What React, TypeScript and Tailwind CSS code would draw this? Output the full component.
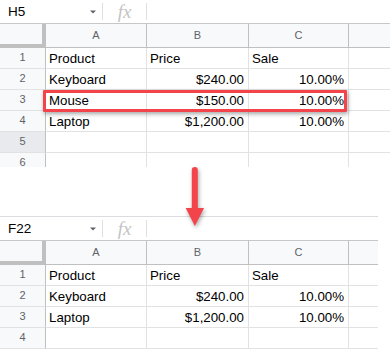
import React from "react";

type Row = [string, string, string];

const FONT = { fontFamily: '"Liberation Sans", Arial, Helvetica, sans-serif' };

const isNum = (s: string) => /^[$0-9]/.test(s);

function FormulaBar({ name, top }: { name: string; top: boolean }) {
  return (
    <div
      className={
        "flex items-stretch bg-white border-b border-[#c7c7c7] " +
        (top ? "h-[25px] border-t border-t-[#dadce0]" : "h-[24px]")
      }
    >
      <div className="w-[102px] shrink-0 flex items-center pl-[8px] pr-[6px] relative">
        <span className="text-[13.5px] text-black leading-none">{name}</span>
        <svg className="absolute left-[90px] top-1/2 -translate-y-1/2" width="6" height="4" viewBox="0 0 6 4">
          <polygon points="0,0.5 6,0.5 3,3.5" fill="#5f6368" />
        </svg>
      </div>
      <div className="w-px bg-[#e0e0e0] my-[3px]" />
      <div className="w-[43px] shrink-0 flex items-center justify-center">
        <span
          className="text-[19px] italic text-[#c4c4c4] leading-none"
          style={{ fontFamily: '"Liberation Serif", "Times New Roman", serif' }}
        >
          fx
        </span>
      </div>
      <div className="w-px bg-[#e0e0e0] my-[3px]" />
      <div className="flex-1" />
    </div>
  );
}

function Cell({ text, widthClass }: { text: string; widthClass: string }) {
  const num = isNum(text);
  return (
    <div
      className={
        widthClass +
        " shrink-0 border-r border-b border-[#e2e2e3] flex items-end pb-[1px] text-[13.3px] leading-[16px] text-black whitespace-nowrap overflow-hidden " +
        (num ? "justify-end pr-[4px]" : "justify-start pl-[3px]")
      }
    >
      {text}
    </div>
  );
}

function Sheet({
  name,
  rows,
  top,
  selectedRow,
  widthClass,
}: {
  name: string;
  rows: Row[];
  top: boolean;
  selectedRow?: number;
  widthClass: string;
}) {
  return (
    <div className={widthClass} style={FONT}>
      <FormulaBar name={name} top={top} />
      <div className="flex h-[24px]">
        <div className="w-[46px] shrink-0 bg-[#f8f9fa] border-r-4 border-b-4 border-[#c0c0c0]" />
        <div className="w-[101px] shrink-0 bg-[#f8f9fa] border-r border-b border-[#c0c0c0] flex items-center justify-center text-[11px] text-[#5f6368]">
          A
        </div>
        <div className="w-[102px] shrink-0 bg-[#f8f9fa] border-r border-b border-[#c0c0c0] flex items-center justify-center text-[11px] text-[#5f6368]">
          B
        </div>
        <div className="w-[100px] shrink-0 bg-[#f8f9fa] border-r border-b border-[#c0c0c0] flex items-center justify-center text-[11px] text-[#5f6368]">
          C
        </div>
        <div className="flex-1 bg-[#f8f9fa] border-b border-[#c0c0c0]" />
      </div>
      {rows.map((r, i) => (
        <div key={i} className="flex h-[21px]">
          <div
            className={
              "w-[46px] shrink-0 border-r border-r-[#c0c0c0] border-b border-b-[#e2e2e3] flex items-center justify-center pb-[1px] text-[11px] text-[#5f6368] " +
              (selectedRow === i + 1 ? "bg-[#e8eaed]" : "bg-[#f8f9fa]")
            }
          >
            {i + 1}
          </div>
          <Cell text={r[0]} widthClass="w-[101px]" />
          <Cell text={r[1]} widthClass="w-[102px]" />
          <Cell text={r[2]} widthClass="w-[100px]" />
          <div className="flex-1 border-b border-[#e2e2e3]" />
        </div>
      ))}
    </div>
  );
}

export default function App() {
  const topRows: Row[] = [
    ["Product", "Price", "Sale"],
    ["Keyboard", "$240.00", "10.00%"],
    ["Mouse", "$150.00", "10.00%"],
    ["Laptop", "$1,200.00", "10.00%"],
    ["", "", ""],
    ["", "", ""],
  ];
  const bottomRows: Row[] = [
    ["Product", "Price", "Sale"],
    ["Keyboard", "$240.00", "10.00%"],
    ["Laptop", "$1,200.00", "10.00%"],
    ["", "", ""],
  ];
  return (
    <div className="relative w-[390px] h-[350px] bg-white overflow-hidden">
      <div className="h-[167px] overflow-hidden">
        <Sheet name="H5" rows={topRows} top={false} selectedRow={5} widthClass="w-[390px]" />
      </div>
      <div className="h-[49px]" />
      <Sheet name="F22" rows={bottomRows} top={true} widthClass="w-[378px]" />

      {/* highlight box */}
      <div className="absolute left-[43px] top-[90px] w-[304px] h-[22px] border-[3px] border-[#f2444a] rounded-[1px] shadow-[1px_2px_4px_rgba(0,0,0,0.35)]" />

      {/* arrow */}
      <svg
        className="absolute left-[185px] top-[165px] drop-shadow-[1px_2px_2px_rgba(0,0,0,0.35)]"
        width="20"
        height="64"
        viewBox="0 0 20 64"
      >
        <path d="M6.8 5 a3 3 0 0 1 6 0 V44 h-6 Z" fill="#f2444a" />
        <polygon points="0.7,43 19,43 9.85,61" fill="#f2444a" />
      </svg>
    </div>
  );
}
